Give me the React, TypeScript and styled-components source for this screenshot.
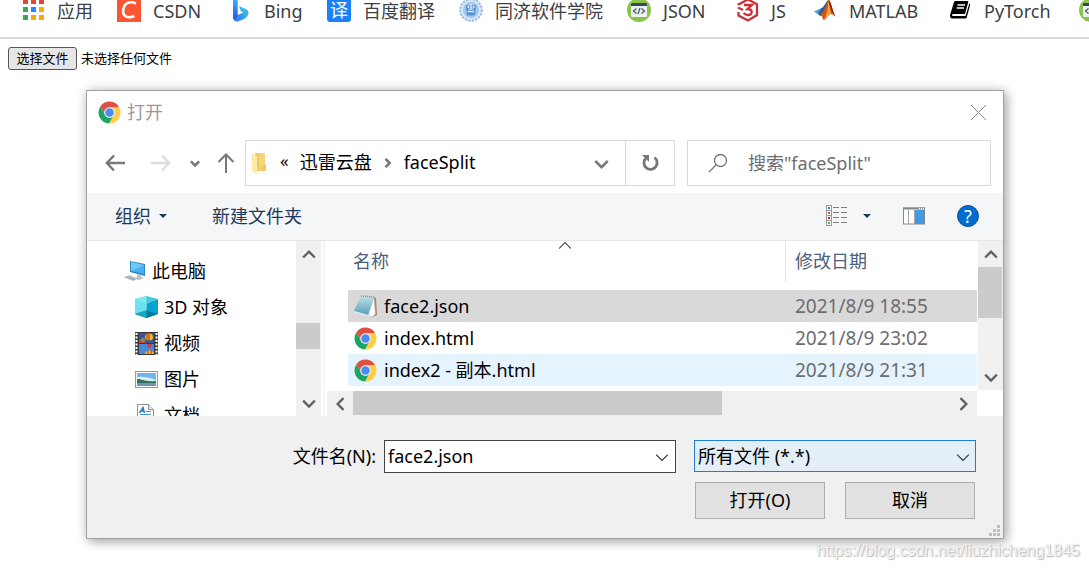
import React, { useRef } from "react";
import styled, { createGlobalStyle } from "styled-components";

const UI_FONT = '"Noto Sans", "Noto Sans CJK SC", sans-serif';

const GlobalStyle = createGlobalStyle`
  * { box-sizing: border-box; }
  body { margin: 0; background: #fff; overflow: hidden; }
  body, button, input, select, table { font-family: ${UI_FONT}; font-size: 18px; line-height: 24px; font-weight: 400; }
  button { padding: 0; border: 0; background: none; color: inherit; }
  svg { display: block; flex: none; }
`;

/* ---------- page ---------- */

const BookmarkBar = styled.nav`
  display: flex;
  align-items: flex-start;
  gap: 24px;
  height: 39px;
  padding-left: 21px;
  overflow: hidden;
  border-bottom: 2px solid #dadae0;
`;

const Bookmark = styled.a<{ $width: number }>`
  display: flex;
  flex: none;
  align-items: center;
  gap: 12px;
  width: ${(p) => p.$width}px;
  height: 22px;
  color: #3c4043;
  text-decoration: none;
  white-space: nowrap;
  svg { margin-top: -2px; }
`;

const UploadRow = styled.div`
  display: flex;
  align-items: center;
  gap: 4px;
  padding: 8px;
  font-size: 13px;
  line-height: 17px;
`;

const ChooseButton = styled.button`
  min-width: 69px;
  height: 23px;
  border: 1px solid #555;
  border-radius: 3px;
  background: #e6e6e6;
  color: #000;
  font-size: 13px;
  line-height: 17px;
`;

const Watermark = styled.p`
  margin: 0;
  padding: 0 9px 0 0;
  text-align: right;
  font: 16px/24px "Liberation Sans", sans-serif;
  color: #f4f4f4;
  text-shadow: 1px 1px 1px #b4b4b4, 0 0 1px #ccc;
`;

/* ---------- dialog frame ---------- */

const Dialog = styled.section`
  margin: 12px 85px 0 86px;
  border: 1px solid #a2a2a4;
  background: #fff;
  box-shadow: 3px 3px 10px rgba(0, 0, 0, 0.28), 0 0 12px rgba(0, 0, 0, 0.14);
`;

const TitleBar = styled.header`
  display: flex;
  align-items: center;
  gap: 6px;
  height: 43px;
  padding: 0 16px 0 11px;
  color: #999;
`;

const Title = styled.h1`
  flex: 1;
  margin: 0;
  padding-bottom: 2px;
  font-size: 18px;
  font-weight: 400;
`;

const NavRow = styled.div`
  display: flex;
  padding: 6px 12px 7px 5px;
`;

const NavButton = styled.button<{ $width: number }>`
  display: flex;
  align-items: center;
  justify-content: center;
  width: ${(p) => p.$width}px;
  height: 46px;
`;

const AddressBox = styled.div`
  display: flex;
  flex: 1;
  align-items: center;
  height: 46px;
  padding-left: 5px;
  border: 1px solid #d9d9d9;
  white-space: nowrap;
`;

const Crumbs = styled.div`
  display: flex;
  flex: 1;
  align-items: center;
  gap: 11px;
  padding-left: 13px;
`;

const Crumb = styled.span`
  padding-bottom: 2px;
`;

const CrumbOverflow = styled(Crumb)`
  padding-bottom: 4px;
  font-size: 17px;
`;

const RefreshButton = styled(NavButton)`
  height: 44px;
  border-left: 1px solid #d9d9d9;
`;

const SearchBox = styled.label`
  display: flex;
  align-items: center;
  gap: 20px;
  width: 304px;
  height: 46px;
  margin-left: 12px;
  padding-left: 20px;
  border: 1px solid #d9d9d9;
`;

const SearchInput = styled.input`
  flex: 1;
  min-width: 0;
  padding: 0;
  border: 0;
  outline: 0;
  background: none;
  &::placeholder { color: #6d6d6d; opacity: 1; }
`;

const Toolbar = styled.div`
  display: flex;
  align-items: center;
  height: 48px;
  padding: 0 24px 2px 28px;
  border-bottom: 1px solid #e6e7e8;
  background: #f4f6f8;
  color: #1e395b;
`;

const ToolButton = styled.button<{ $gap: number }>`
  display: flex;
  align-items: center;
  gap: 8px;
  margin-right: ${(p) => p.$gap}px;
`;

const Spacer = styled.span`
  flex: 1;
`;

/* ---------- dialog body ---------- */

const Body = styled.div`
  display: flex;
  height: 175px;
  overflow: hidden;
`;

const Tree = styled.ul`
  flex: none;
  width: 209px;
  height: 100%;
  margin: 0;
  padding: 12px 0 0;
  overflow: hidden;
  list-style: none;
`;

const TreeItem = styled.li<{ $level: number }>`
  display: flex;
  align-items: center;
  gap: 6px;
  height: 36px;
  padding-left: ${(p) => 36 + p.$level * 12}px;
`;

const ScrollTrack = styled.div<{ $horizontal?: boolean }>`
  display: flex;
  flex: none;
  flex-direction: ${(p) => (p.$horizontal ? "row" : "column")};
  ${(p) => (p.$horizontal ? "height: 25px;" : "width: 25px;")}
  background: #f0f0f0;
`;

const ScrollArrow = styled.button`
  display: flex;
  flex: none;
  align-items: center;
  justify-content: center;
  width: 26px;
  height: 26px;
`;

const ScrollThumb = styled.div<{ $before: string; $size: string; $horizontal?: boolean }>`
  flex: none;
  background: #cbcbcb;
  ${(p) =>
    p.$horizontal
      ? `width: ${p.$size}; height: 24px; margin-left: ${p.$before}; margin-right: auto;`
      : `height: ${p.$size}; width: 24px; margin-top: ${p.$before}; margin-bottom: auto;`}
`;

const Splitter = styled.div`
  flex: none;
  width: 4px;
  border: solid #fff;
  border-width: 0 0 0 2px;
  background: #f5f5f5;
`;

const FilePane = styled.div`
  display: flex;
  flex: 1;
  flex-direction: column;
  min-width: 0;
`;

const FileArea = styled.div`
  display: flex;
  flex: 1;
  min-height: 0;
`;

const ListHolder = styled.div`
  position: relative;
  flex: 1;
  padding: 0 1px 0 23px;
`;

const SortMark = styled.span`
  position: absolute;
  top: -3px;
  left: 233px;
`;

const FileTable = styled.table`
  width: 100%;
  border-spacing: 0;
  table-layout: fixed;
  tbody::before { content: ""; display: block; height: 8px; }
`;

const HeadCell = styled.th<{ $width?: string }>`
  width: ${(p) => p.$width || "auto"};
  height: 41px;
  padding: 0 0 2px 5px;
  color: #4c607a;
  font-weight: 400;
  text-align: left;
  & + & { padding-left: 9px; border-left: 1px solid #e5e5e5; }
`;

const FileRow = styled.tr<{ $tone: "selected" | "plain" | "hover" }>`
  height: 32px;
  background: ${(p) => ({ selected: "#d9d9d9", plain: "#fff", hover: "#e5f3ff" })[p.$tone]};
`;

const NameCell = styled.td`
  padding: 0 0 0 6px;
`;

const FileName = styled.span`
  display: flex;
  align-items: center;
  gap: 7px;
`;

const DateCell = styled.td`
  padding: 0 0 0 10px;
  color: #6d6d6d;
  font-size: 19px;
`;

const BottomScroll = styled.div`
  padding: 1px 26px 0 2px;
`;

/* ---------- dialog footer ---------- */

const Footer = styled.footer`
  position: relative;
  padding: 24px 27px 19px;
  background: #f0f0f0;
`;

const FieldRow = styled.div`
  display: flex;
  align-items: center;
  justify-content: flex-end;
`;

const FieldLabel = styled.label`
  margin-right: 8px;
  padding-bottom: 2px;
`;

const ComboBox = styled.div`
  display: flex;
  align-items: center;
  width: 292px;
  height: 33px;
  margin-right: 18px;
  border: 1px solid #444;
  background: #fff;
`;

const ComboInput = styled.input`
  flex: 1;
  min-width: 0;
  padding: 0 0 2px 3px;
  border: 0;
  outline: 0;
  background: none;
`;

const SelectWrap = styled.div`
  display: grid;
  align-items: start;
  width: 282px;
  height: 33px;
  & > * { grid-area: 1 / 1; }
  svg { align-self: center; justify-self: end; margin-right: 6px; pointer-events: none; }
`;

const TypeSelect = styled.select`
  width: 100%;
  height: 32px;
  padding: 0 30px 1px 3px;
  border: 1px solid #1c7fd0;
  border-radius: 0;
  outline: 0;
  background: #e4eef7;
  color: #000;
  appearance: none;
`;

const Actions = styled.div`
  display: flex;
  justify-content: flex-end;
  gap: 20px;
  padding: 9px 1px 0 0;
`;

const ActionButton = styled.button`
  width: 130px;
  height: 37px;
  padding-bottom: 2px;
  border: 1px solid #adadad;
  background: #e1e1e1;
  color: #000;
`;

const Grip = styled.span`
  position: absolute;
  right: 3px;
  bottom: 2px;
`;

/* ---------- drawings ---------- */

const Chevron = ({ dir, size = 14, width = 2, color = "#606060" }: { dir: "up" | "down" | "left" | "right"; size?: number; width?: number; color?: string }) => {
  const d = { up: "M1 9 6 4 11 9", down: "M1 4 6 9 11 4", left: "M9 1 4 6 9 11", right: "M3 1 8 6 3 11" }[dir];
  return (
    <svg width={size} height={size} viewBox="0 0 12 12" fill="none" stroke={color} strokeWidth={width} aria-hidden="true">
      <path d={d} />
    </svg>
  );
};

const Caret = () => (
  <svg width="8" height="4" viewBox="0 0 8 4" aria-hidden="true"><path d="M0 0H8L4 4Z" fill="#1e395b" /></svg>
);

const ChromeIcon = () => (
  <svg width="23" height="23" viewBox="1 1 46 46" aria-hidden="true">
    <path fill="#dd5144" d="M24 14H43.6A22 22 0 0 0 5.54 12.03L15.34 29A10 10 0 0 1 24 14Z" />
    <path fill="#ffcd46" d="M32.66 29 22.86 45.97A22 22 0 0 0 43.6 14H24A10 10 0 0 1 32.66 29Z" />
    <path fill="#1da462" d="M15.34 29 5.54 12.03A22 22 0 0 0 22.86 45.97L32.66 29A10 10 0 0 1 15.34 29Z" />
    <circle cx="24" cy="24" r="10.5" fill="#f1f1f1" />
    <circle cx="24" cy="24" r="8.5" fill="#4c8bf5" />
  </svg>
);

const AppsIcon = () => (
  <svg width="24" height="24" viewBox="0 0 24 24" aria-hidden="true">
    {["#ea4335", "#ea4335", "#ea4335", "#34a853", "#1a8cff", "#fbab00", "#34a853", "#fbab00", "#fbab00"].map((c, i) => (
      <rect key={i} x={2 + (i % 3) * 8} y={1 + Math.floor(i / 3) * 8} width="5" height="5" fill={c} />
    ))}
  </svg>
);

const CsdnIcon = () => (
  <svg width="24" height="24" viewBox="0 0 24 24" aria-hidden="true">
    <rect width="24" height="24" fill="#fc5531" />
    <path d="M19 5.6C14 3 7.500 4.200 6.300 11.500 5 18.500 11 20.800 17.400 18" fill="none" stroke="#fff" strokeWidth="2.600" />
  </svg>
);

const BingIcon = () => (
  <svg width="24" height="24" viewBox="0 0 24 24" aria-hidden="true">
    <defs>
      <linearGradient id="bingStem" x1="0" y1="0" x2="0" y2="1"><stop offset="0" stopColor="#39b9f5" /><stop offset="1" stopColor="#2456e0" /></linearGradient>
      <linearGradient id="bingTail" x1="0" y1="1" x2="1" y2="0"><stop offset="0" stopColor="#2b6df0" /><stop offset="1" stopColor="#45e0e8" /></linearGradient>
    </defs>
    <path d="M5 0 9.500 2.500V17L14 15 19.500 12.500C21.500 17 19 19.500 16 21L10 23.500C7 24 5 22 5 19Z" fill="url(#bingTail)" />
    <path d="M5 0 9.500 2.500V18.500L6.500 21.500C5.400 21 5 20 5 19Z" fill="url(#bingStem)" />
    <path d="M11 8 18 11.200C20 12.500 20.500 14 20.500 16L13 13.500Z" fill="#2fb7ee" />
  </svg>
);

const TranslateBadge = styled.span`
  display: flex;
  flex: none;
  align-items: center;
  justify-content: center;
  width: 24px;
  height: 24px;
  margin-top: -2px;
  border-radius: 3px;
  background: #1a82f7;
  color: #fff;
  font-size: 18px;
  line-height: 18px;
`;

const TongjiIcon = () => (
  <svg width="24" height="24" viewBox="0 0 24 24" fill="none" aria-hidden="true">
    <circle cx="12" cy="12" r="11.500" fill="#d5e6f6" />
    <circle cx="12" cy="12" r="10.800" stroke="#8db8e4" strokeWidth="1.800" strokeDasharray="2 1.500" />
    <circle cx="12" cy="12" r="8" fill="#a3c8ec" />
    <path d="M7.500 7 8.500 17H15.500L16.500 7" fill="#6fa6dd" stroke="#5a95d2" strokeWidth="1.200" />
    <path d="M9 8 10 12M15 8 14 12M12 6V12M9 13.500H15" stroke="#edf6ff" strokeWidth="1.200" />
    <path d="M9 10V12M15 10V12M9.500 16H14.500" stroke="#397dc4" strokeWidth="1.200" />
  </svg>
);

const CodeIcon = () => (
  <svg width="24" height="24" viewBox="0 0 24 24" aria-hidden="true">
    <circle cx="12" cy="12" r="12" fill="#8bc34a" />
    <rect x="4" y="5" width="16" height="14" rx="1" fill="#ecf0f1" />
    <path d="M4 8V6a1 1 0 0 1 1-1h14a1 1 0 0 1 1 1v2Z" fill="#324a5e" />
    <path d="M9.500 10.500 6.500 13l3 2.500M14.500 10.500l3 2.500-3 2.500M13 10l-2 6" fill="none" stroke="#4a5a68" strokeWidth="1.300" />
  </svg>
);

const JsIcon = () => (
  <svg width="24" height="24" viewBox="0 0 24 24" fill="none" stroke="#cc3038" aria-hidden="true">
    <path d="M3.500 7V6.500L13 1.500 22 6.200V17L13 22.500 3.500 17.500V14" strokeWidth="2.300" />
    <path d="M9 7H17L12.500 11C18 11 18 17 13 17 10.500 17 9.500 16 8.500 15" strokeWidth="2.300" />
    <path d="M3 9.500 8 12" strokeWidth="2" />
  </svg>
);

const MatlabIcon = () => (
  <svg width="24" height="24" viewBox="0 0 24 24" aria-hidden="true">
    <path d="M1 13.500 8.500 10 12 13.500 7.500 18Z" fill="#4b9fd8" />
    <path d="M8.500 10C11.500 9 13 3 15.500 2L11 14.500 7.500 18 5 16Z" fill="#295f94" />
    <path d="M7 17C10 18 9.500 22 11 22 14 21 15 16 18 16 20 16 20.500 18 22.500 18.500 19.500 14 18 2 15.500 2 13 6 13 12 7 17Z" fill="#d95319" />
    <path d="M15.500 2C14.500 7 16 12 11 22 14 21 15 16 18 16Z" fill="#f2a33c" />
    <path d="M15.500 2C17 8 17.500 13 22.500 18.500 19.500 14 18 2 15.500 2Z" fill="#8a1f11" />
  </svg>
);

const BookIcon = () => (
  <svg width="24" height="24" viewBox="0 0 24 24" aria-hidden="true">
    <path d="M7.500 3H19.500Q20.500 3 20.300 4L17 16H5Q3.800 16.500 4.200 18H17.500L21.500 5Q22.500 6 22 7.500L18.700 19.500Q18.400 20.500 17.500 20.500H4.500C2 20.500 1.500 18 2.500 15.500L6 4Q6.500 3 7.500 3Z" fill="#000" />
    <path d="M9.500 7H17M8.700 10H16" stroke="#fff" strokeWidth="1.300" />
  </svg>
);

const FolderIcon = () => (
  <svg width="16" height="22" viewBox="0 0 16 22" aria-hidden="true">
    <path d="M4 1H14V12L15 13V19H4Z" fill="#eecb68" />
    <path d="M8 1H14V12L8 18Z" fill="#f5d67c" />
    <path d="M1 1 6 4V22L1 19Z" fill="#ffe9a6" />
  </svg>
);

const RefreshIcon = () => (
  <svg width="18" height="18" viewBox="0 0 18 18" aria-hidden="true">
    <path d="M13.500 3.500A6.600 6.600 0 1 1 4.500 4.500" fill="none" stroke="#777" strokeWidth="2.800" />
    <path d="M1 1H8V8L6 6 4.500 4.500Z" fill="#777" />
  </svg>
);

const ViewIcon = () => (
  <svg width="22" height="22" viewBox="0 0 22 22" aria-hidden="true">
    {["#3a78b5", "#b55b3a", "#d02020", "#6aa84f"].map((c, i) => (
      <g key={i}>
        <rect x="0.5" y={0.5 + i * 5} width="5" height="5" fill="#fff" stroke="#999" />
        <rect x="2" y={2 + i * 5} width="2" height="2" fill={c} />
        <path d={`M7 ${2.5 + i * 5}H13M15 ${2.5 + i * 5}H21`} stroke="#808080" />
      </g>
    ))}
  </svg>
);

const PaneIcon = () => (
  <svg width="22" height="18" viewBox="0 0 22 18" aria-hidden="true">
    <rect x="0.5" y="1" width="21" height="16" fill="#fff" stroke="#808890" />
    <path d="M0 1.500H22" stroke="#808890" strokeWidth="2" />
    <path d="M5.500 3V17M11.500 3V17" stroke="#a5a5a5" />
    <rect x="12" y="3" width="9" height="14" fill="#3f9be4" />
    <path d="M16 1.500H21" stroke="#fff" strokeDasharray="1 1" />
  </svg>
);

const HelpMark = styled.span`
  display: flex;
  align-items: center;
  justify-content: center;
  width: 22px;
  height: 22px;
  border: 1px solid #074d8f;
  border-radius: 50%;
  background: #006cd0;
  color: #fff;
  font-size: 18px;
  line-height: 20px;
`;

const ComputerIcon = () => (
  <svg width="23" height="22" viewBox="0 0 23 22" aria-hidden="true">
    <path d="M7 1 22 4V16L7 12Z" fill="#2d83bd" />
    <path d="M8 2 21 5V14L8 11Z" fill="#45b2f4" />
    <path d="M8 2 21 5 8 11Z" fill="#72c8fa" />
    <path d="M14 14 18 15V17L21 18 16 20 11 18 14 17Z" fill="#b8c0c6" />
    <path d="M0 17 7 15 15 19 10 21Z" fill="#c4cbd0" />
    <path d="M3 17 12 20M6 16 4 18M9 17 6 19M12 18 9 20" stroke="#8d98a0" strokeWidth="0.700" />
  </svg>
);

const CubeIcon = () => (
  <svg width="23" height="22" viewBox="0 0 23 22" aria-hidden="true">
    <path d="M0 3 11.500 7.500V22L0 18Z" fill="#6be3ee" />
    <path d="M23 3 11.500 7.500V22L23 18Z" fill="#00a3d2" />
    <path d="M11.500 0 23 3 11.500 7.500 0 3Z" fill="#45c9d6" />
    <path d="M11.500 0V7.500L0 3Z" fill="#7fe9ef" />
    <path d="M0 18 11.500 14.500 23 18 11.500 22Z" fill="#05789b" />
    <path d="M0 18 11.500 14.500V22Z" fill="#12a9bf" />
  </svg>
);

const FilmIcon = () => (
  <svg width="23" height="23" viewBox="0 0 23 23" aria-hidden="true">
    <rect width="23" height="23" fill="#3a3a3a" />
    <path d="M1.500 1V23M21.500 1V23" stroke="#fff" strokeWidth="2" strokeDasharray="2 1.500" />
    <rect x="4" y="1" width="15" height="10" fill="#3552a4" />
    <rect x="4" y="12" width="15" height="10" fill="#4587d8" />
    <path d="M4 8 9 5 11 11H4Z" fill="#d8392a" />
    <ellipse cx="14" cy="5" rx="4" ry="3.500" fill="#f1c021" />
    <path d="M14 1.500V9M12 2V8" stroke="#ae2618" />
    <circle cx="8" cy="8" r="2" fill="#4eae49" />
    <path d="M12 12H17L15 16H14Z" fill="#d83a23" />
    <path d="M10 22C11 17 18 17 19 22Z" fill="#f1c021" />
    <path d="M13 18V22M16 18V22" stroke="#c33023" />
  </svg>
);

const PhotoIcon = () => (
  <svg width="23" height="17" viewBox="0 0 23 17" aria-hidden="true">
    <rect x="0.5" y="0.5" width="22" height="16" fill="#fff" stroke="#999" />
    <rect x="2" y="2" width="19" height="13" fill="#73b5ed" />
    <path d="M2 6Q10 5 21 9V12H2Z" fill="#d8eefb" />
    <path d="M2 8C7 8 10 11 21 10V13H2Z" fill="#366f5b" />
    <path d="M2 12H21V15H2Z" fill="#6f93b5" />
  </svg>
);

const DocIcon = () => (
  <svg width="23" height="22" viewBox="0 0 23 22" aria-hidden="true">
    <path d="M2.500 0.500H13.500L18.500 5.500V21.500H2.500Z" fill="#fff" stroke="#8b9096" />
    <path d="M13.500 0.500V5.500H18.500" fill="#dceafa" stroke="#8b9096" />
    <path d="M4.500 9 8 3.500 9.500 9M6 7H9" fill="none" stroke="#267cc5" strokeWidth="1.500" />
    <path d="M11 7.500H16M5 10.500H16M5 13.500H16M5 16.500H16" stroke="#4392d2" />
  </svg>
);

const NotepadIcon = () => (
  <svg width="23" height="23" viewBox="0 0 23 23" aria-hidden="true">
    <defs>
      <linearGradient id="notepadPage" x1="0" y1="0" x2="0" y2="1"><stop offset="0" stopColor="#c2e2e7" /><stop offset="1" stopColor="#559fb4" /></linearGradient>
    </defs>
    <path d="M20 2 22 3 23 20 18 22Z" fill="#a98454" />
    <path d="M20 2 21.500 19 18 22 14 20Z" fill="#fafafa" stroke="#aaa" strokeWidth="0.500" />
    <path d="M7 1 20 2 14 20 0 16Z" fill="url(#notepadPage)" />
    <path d="M0 16 14 20 17 22 1 18Z" fill="#dfeaea" />
    <path d="M7 1 20 2" stroke="#8c9999" strokeWidth="1.600" strokeDasharray="1 1" />
  </svg>
);

/* ---------- data ---------- */

const bookmarks = [
  { label: "应用", icon: <AppsIcon />, width: 72 },
  { label: "CSDN", icon: <CsdnIcon />, width: 87 },
  { label: "Bing", icon: <BingIcon />, width: 75 },
  { label: "百度翻译", icon: <TranslateBadge>译</TranslateBadge>, width: 108 },
  { label: "同济软件学院", icon: <TongjiIcon />, width: 144 },
  { label: "JSON", icon: <CodeIcon />, width: 84 },
  { label: "JS", icon: <JsIcon />, width: 54 },
  { label: "MATLAB", icon: <MatlabIcon />, width: 111 },
  { label: "PyTorch", icon: <BookIcon />, width: 107 },
  { label: "", icon: <CodeIcon />, width: 24 },
];

const places = [
  { label: "此电脑", icon: <ComputerIcon />, level: 0 },
  { label: "3D 对象", icon: <CubeIcon />, level: 1 },
  { label: "视频", icon: <FilmIcon />, level: 1 },
  { label: "图片", icon: <PhotoIcon />, level: 1 },
  { label: "文档", icon: <DocIcon />, level: 1 },
];

const files = [
  { name: "face2.json", date: "2021/8/9 18:55", icon: <NotepadIcon />, tone: "selected" as const },
  { name: "index.html", date: "2021/8/9 23:02", icon: <ChromeIcon />, tone: "plain" as const },
  { name: "index2 - 副本.html", date: "2021/8/9 21:31", icon: <ChromeIcon />, tone: "hover" as const },
];

export default function App() {
  const fileInput = useRef<HTMLInputElement>(null);
  return (
    <>
      <GlobalStyle />
      <BookmarkBar>
        {bookmarks.map((b, i) => (
          <Bookmark key={i} href="#" $width={b.width}>
            {b.icon}
            {b.label && <span>{b.label}</span>}
          </Bookmark>
        ))}
      </BookmarkBar>

      <UploadRow>
        <input ref={fileInput} type="file" hidden />
        <ChooseButton type="button" onClick={() => fileInput.current?.click()}>选择文件</ChooseButton>
        <span>未选择任何文件</span>
      </UploadRow>

      <Dialog role="dialog" aria-labelledby="dialog-title">
        <TitleBar>
          <ChromeIcon />
          <Title id="dialog-title">打开</Title>
          <button type="button" aria-label="关闭">
            <svg width="17" height="17" viewBox="0 0 17 17" stroke="#888" aria-hidden="true"><path d="M1 1 16 16M16 1 1 16" /></svg>
          </button>
        </TitleBar>

        <NavRow>
          <NavButton type="button" $width={46} aria-label="后退">
            <svg width="20" height="18" viewBox="0 0 20 18" fill="none" stroke="#777" strokeWidth="2.400"><path d="M20 9H2M9 1.500 1.800 9 9 16.500" /></svg>
          </NavButton>
          <NavButton type="button" $width={46} aria-label="前进">
            <svg width="20" height="18" viewBox="0 0 20 18" fill="none" stroke="#ddd" strokeWidth="2.400"><path d="M0 9H18M11 1.500 18.200 9 11 16.500" /></svg>
          </NavButton>
          <NavButton type="button" $width={22} aria-label="最近位置"><Chevron dir="down" size={10} width={3} color="#777" /></NavButton>
          <NavButton type="button" $width={39} aria-label="上移">
            <svg width="18" height="20" viewBox="0 0 18 20" fill="none" stroke="#777" strokeWidth="2"><path d="M9 20V2M1.500 9 9 1.500 16.500 9" /></svg>
          </NavButton>
          <AddressBox>
            <FolderIcon />
            <Crumbs>
              <CrumbOverflow>«</CrumbOverflow>
              <Crumb>迅雷云盘</Crumb>
              <Chevron dir="right" size={10} width={3} color="#777" />
              <Crumb>faceSplit</Crumb>
            </Crumbs>
            <NavButton type="button" $width={48} aria-label="历史记录"><Chevron dir="down" size={15} color="#777" /></NavButton>
            <RefreshButton type="button" $width={49} aria-label="刷新"><RefreshIcon /></RefreshButton>
          </AddressBox>
          <SearchBox>
            <svg width="20" height="20" viewBox="0 0 20 20" fill="none" stroke="#777" strokeWidth="1.300" aria-hidden="true"><circle cx="12.500" cy="7.500" r="6" /><path d="M8 12 1 19" /></svg>
            <SearchInput type="text" placeholder={'搜索"faceSplit"'} aria-label="搜索" />
          </SearchBox>
        </NavRow>

        <Toolbar>
          <ToolButton type="button" $gap={45}>组织<Caret /></ToolButton>
          <ToolButton type="button" $gap={0}>新建文件夹</ToolButton>
          <Spacer />
          <ToolButton type="button" $gap={15} aria-label="更改视图"><ViewIcon /></ToolButton>
          <ToolButton type="button" $gap={32} aria-label="更多选项"><Caret /></ToolButton>
          <ToolButton type="button" $gap={32} aria-label="预览窗格"><PaneIcon /></ToolButton>
          <ToolButton type="button" $gap={0} aria-label="帮助"><HelpMark>?</HelpMark></ToolButton>
        </Toolbar>

        <Body>
          <Tree>
            {places.map((p) => (
              <TreeItem key={p.label} $level={p.level}>{p.icon}<span>{p.label}</span></TreeItem>
            ))}
          </Tree>
          <ScrollTrack>
            <ScrollArrow type="button" aria-label="向上滚动"><Chevron dir="up" /></ScrollArrow>
            <ScrollThumb $before="56px" $size="26px" />
            <ScrollArrow type="button" aria-label="向下滚动"><Chevron dir="down" /></ScrollArrow>
          </ScrollTrack>
          <Splitter />
          <FilePane>
            <FileArea>
              <ListHolder>
                <SortMark><Chevron dir="up" width={1} color="#555" /></SortMark>
                <FileTable>
                  <thead>
                    <tr><HeadCell scope="col">名称</HeadCell><HeadCell scope="col" $width="192px">修改日期</HeadCell></tr>
                  </thead>
                  <tbody>
                    {files.map((f) => (
                      <FileRow key={f.name} $tone={f.tone}>
                        <NameCell><FileName>{f.icon}{f.name}</FileName></NameCell>
                        <DateCell>{f.date}</DateCell>
                      </FileRow>
                    ))}
                  </tbody>
                </FileTable>
              </ListHolder>
              <ScrollTrack>
                <ScrollArrow type="button" aria-label="列表向上滚动"><Chevron dir="up" /></ScrollArrow>
                <ScrollThumb $before="0px" $size="51px" />
                <ScrollArrow type="button" aria-label="列表向下滚动"><Chevron dir="down" /></ScrollArrow>
              </ScrollTrack>
            </FileArea>
            <BottomScroll>
              <ScrollTrack $horizontal>
                <ScrollArrow type="button" aria-label="向左滚动"><Chevron dir="left" /></ScrollArrow>
                <ScrollThumb $horizontal $before="0px" $size="calc(57% - 2px)" />
                <ScrollArrow type="button" aria-label="向右滚动"><Chevron dir="right" /></ScrollArrow>
              </ScrollTrack>
            </BottomScroll>
          </FilePane>
        </Body>

        <Footer>
          <FieldRow>
            <FieldLabel htmlFor="file-name">文件名(N):</FieldLabel>
            <ComboBox>
              <ComboInput id="file-name" type="text" defaultValue="face2.json" />
              <ScrollArrow type="button" aria-label="显示文件名列表"><Chevron dir="down" width={1} color="#333" /></ScrollArrow>
            </ComboBox>
            <SelectWrap>
              <TypeSelect aria-label="文件类型"><option>所有文件 (*.*)</option></TypeSelect>
              <Chevron dir="down" width={1} color="#333" />
            </SelectWrap>
          </FieldRow>
          <Actions>
            <ActionButton type="button">打开(O)</ActionButton>
            <ActionButton type="button">取消</ActionButton>
          </Actions>
          <Grip>
            <svg width="11" height="11" viewBox="0 0 11 11" fill="#bfbfbf" aria-hidden="true">
              <path d="M8 0h3v3H8zM8 4h3v3H8zM4 4h3v3H4zM8 8h3v3H8zM4 8h3v3H4zM0 8h3v3H0z" />
            </svg>
          </Grip>
        </Footer>
      </Dialog>

      <Watermark>https://blog.csdn.net/liuzhicheng1845</Watermark>
    </>
  );
}
